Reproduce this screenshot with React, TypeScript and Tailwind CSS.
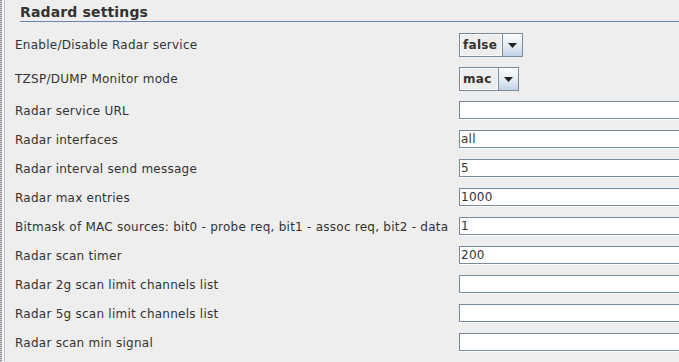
import React from "react";

const font = { fontFamily: '"DejaVu Sans", "Noto Sans", sans-serif' };

function Combo({ value, textW }: { value: string; textW: string }) {
  return (
    <div className="flex h-[24px] border border-[#7a8a99]">
      <div className={`${textW} flex items-center border border-[#f8f8f8] bg-[#eeeeee] pl-[2px] text-[12px] font-bold leading-[16px] tracking-[0.3px] text-[#333333]`}>
        {value}
      </div>
      <div className="flex w-[20px] items-center justify-center border-l border-[#7a8a99] bg-gradient-to-b from-[#fbfcfe] via-[#e6eef6] to-[#c3d4e6]">
        <svg width="9" height="5" viewBox="0 0 9 5">
          <path d="M0 0 H9 L4.5 5 Z" fill="#222222" />
        </svg>
      </div>
    </div>
  );
}

function Field({ value }: { value: string }) {
  return (
    <div className="h-[19px] w-[400px] border-b border-white">
      <div className="flex h-[18px] items-center border border-[#7a8a99] bg-white pl-[1px] text-[12px] leading-[16px] tracking-[0.25px] text-[#333333]">
        {value}
      </div>
    </div>
  );
}

const rows: { label: string; value: string }[] = [
  { label: "Radar service URL", value: "" },
  { label: "Radar interfaces", value: "all" },
  { label: "Radar interval send message", value: "5" },
  { label: "Radar max entries", value: "1000" },
  { label: "Bitmask of MAC sources: bit0 - probe req, bit1 - assoc req, bit2 - data", value: "1" },
  { label: "Radar scan timer", value: "200" },
  { label: "Radar 2g scan limit channels list", value: "" },
  { label: "Radar 5g scan limit channels list", value: "" },
  { label: "Radar scan min signal", value: "" },
];

export default function App() {
  return (
    <div className="flex h-[362px] w-[679px] overflow-hidden bg-[#eeeeee]" style={font}>
      <div className="w-[2px] bg-[repeating-linear-gradient(to_bottom,#8c8c8c_0px,#8c8c8c_1px,#d8d8d8_1px,#d8d8d8_2px)]" />
      <div className="w-[2px] bg-[#f6f6f6]" />
      <div className="w-[1px] bg-[#b9c3d0]" />
      <div className="min-w-0 flex-1 pl-[10px]">
        <div className="ml-[5px] h-[22px] border-b border-[#6a84b5] pt-[4px] text-[14px] font-bold leading-[16px] tracking-[0.15px] text-[#333333]">
          Radard settings
        </div>
        <div className="mt-[11px] grid grid-cols-[444px_1fr] gap-y-[10px] text-[12px] leading-[16px] tracking-[0.25px] text-[#333333]">
          <div className="flex items-center">Enable/Disable Radar service</div>
          <div className="flex">
            <Combo value="false" textW="w-[42px]" />
          </div>
          <div className="flex items-center">TZSP/DUMP Monitor mode</div>
          <div className="flex">
            <Combo value="mac" textW="w-[38px]" />
          </div>
          {rows.map((r) => (
            <React.Fragment key={r.label}>
              <div className="flex items-center whitespace-nowrap">{r.label}</div>
              <Field value={r.value} />
            </React.Fragment>
          ))}
        </div>
      </div>
    </div>
  );
}
